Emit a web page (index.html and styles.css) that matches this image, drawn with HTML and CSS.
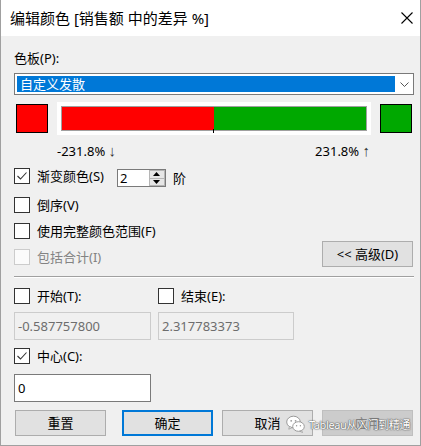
FILE: index.html
```html
<!DOCTYPE html>
<html lang="zh-CN">
<head>
<meta charset="utf-8">
<title>编辑颜色</title>
<link rel="stylesheet" href="styles.css">
</head>
<body>
<div class="window">
  <div class="titlebar">
    <span class="title">编辑颜色 [销售额 中的差异 %]</span>
    <svg class="close" width="12" height="12" viewBox="0 0 12 12"><path d="M0.5 0.5 L11.5 11.5 M11.5 0.5 L0.5 11.5" stroke="#000" stroke-width="1.1" fill="none"/></svg>
  </div>
  <div class="content">
    <div class="label">色板(P):</div>
    <div class="combo">
      <div class="combo-sel">自定义发散</div>
      <div class="combo-arrow"><svg width="9" height="5" viewBox="0 0 9 5"><path d="M0.5 0.5 L4.5 4.5 L8.5 0.5" stroke="#555" stroke-width="1" fill="none"/></svg></div>
    </div>
    <div class="color-row">
      <div class="swatch swatch-red"></div>
      <div class="ramp-frame">
        <div class="ramp">
          <div class="ramp-half ramp-red"></div>
          <div class="ramp-half ramp-green"></div>
          <span class="tick"></span>
        </div>
      </div>
      <div class="swatch swatch-green"></div>
    </div>
    <div class="range-labels"><span>-231.8% <span class="arrow">↓</span></span><span>231.8% <span class="arrow">↑</span></span></div>

    <div class="row row-step">
      <span class="cb checked"><svg viewBox="0 0 14 14" width="14" height="14"><polyline points="2.5,7 5.5,10 11.5,3.5" fill="none" stroke="#333" stroke-width="1.1"/></svg></span>
      <span class="cb-text">渐变颜色(S)</span>
      <div class="spin">
        <span class="spin-val">2</span>
        <div class="spin-btns">
          <div class="spin-btn"><svg width="7" height="4" viewBox="0 0 7 4"><path d="M0 4 L3.5 0 L7 4 Z" fill="#000"/></svg></div>
          <div class="spin-btn"><svg width="7" height="4" viewBox="0 0 7 4"><path d="M0 0 L3.5 4 L7 0 Z" fill="#000"/></svg></div>
        </div>
      </div>
      <span class="step-unit">阶</span>
    </div>
    <div class="row row-gap">
      <span class="cb"></span><span class="cb-text">倒序(V)</span>
    </div>
    <div class="row row-gap">
      <span class="cb"></span><span class="cb-text">使用完整颜色范围(F)</span>
    </div>
    <div class="row row-adv">
      <div class="adv-left"><span class="cb disabled"></span><span class="cb-text text-disabled">包括合计(I)</span></div>
      <button class="btn btn-adv">&lt;&lt; 高级(D)</button>
    </div>
    <div class="separator"></div>
    <div class="row row-range">
      <div class="range-col"><span class="cb"></span><span class="cb-text">开始(T):</span></div>
      <div class="range-col"><span class="cb"></span><span class="cb-text">结束(E):</span></div>
    </div>
    <div class="fields">
      <div class="field field-disabled field-start">-0.587757800</div>
      <div class="field field-disabled field-end">2.317783373</div>
    </div>
    <div class="row row-center">
      <span class="cb checked"><svg viewBox="0 0 14 14" width="14" height="14"><polyline points="2.5,7 5.5,10 11.5,3.5" fill="none" stroke="#333" stroke-width="1.1"/></svg></span>
      <span class="cb-text">中心(C):</span>
    </div>
    <div class="field field-center">0</div>
    <div class="buttons">
      <button class="btn btn-reset">重置</button>
      <button class="btn btn-default">确定</button>
      <button class="btn">取消</button>
      <button class="btn btn-disabled">应用</button>
    </div>
  </div>
  <div class="watermark">
    <svg class="wm-icon" width="19" height="18" viewBox="0 0 19 18">
      <ellipse cx="7.5" cy="7" rx="6.8" ry="5.8" fill="#fff" stroke="#9a9a9a" stroke-width="1"/>
      <path d="M3.5 11.5 L2.8 14.2 L6 12.6 Z" fill="#fff" stroke="#9a9a9a" stroke-width="0.8"/>
      <ellipse cx="12.5" cy="11.5" rx="5.8" ry="4.8" fill="#fff" stroke="#9a9a9a" stroke-width="1"/>
      <path d="M15.5 15.3 L16.5 17.5 L13.8 16.2 Z" fill="#fff" stroke="#9a9a9a" stroke-width="0.8"/>
      <circle cx="5.2" cy="5.8" r="0.9" fill="#9a9a9a"/>
      <circle cx="9.6" cy="5.8" r="0.9" fill="#9a9a9a"/>
      <circle cx="10.6" cy="10.8" r="0.7" fill="#9a9a9a"/>
      <circle cx="14.4" cy="10.8" r="0.7" fill="#9a9a9a"/>
    </svg>
    <span class="wm-text">Tableau从入门到精通</span>
  </div>
</div>
</body>
</html>
```

FILE: styles.css
```css
* { box-sizing: border-box; }
html, body { margin: 0; padding: 0; }
body {
  font-family: "Noto Sans", "Noto Sans CJK SC", sans-serif;
  font-size: 13px;
  color: #000;
  background: #f0f0f0;
}
.window {
  position: relative;
  width: 421px;
  height: 446px;
  border: 1px solid #a0a0a0;
  border-top: none;
  background: #f0f0f0;
  overflow: hidden;
}
.titlebar {
  height: 36px;
  background: #fff;
  display: flex;
  align-items: center;
  justify-content: space-between;
  padding: 0 7px 0 9px;
}
.title {
  font-size: 15px;
  line-height: 18px;
  font-family: "Noto Sans", "Noto Sans CJK SC", sans-serif;
}
.close { display: block; }
.content {
  padding: 14px 6px 0 13px;
  display: flex;
  flex-direction: column;
}
.label { height: 16px; line-height: 16px; }
.combo {
  margin-top: 7px;
  height: 22px;
  border: 1px solid #7a7a7a;
  background: #fff;
  display: flex;
  padding: 2px 0 2px 2px;
}
.combo-sel {
  flex: 1;
  background: #0078d7;
  color: #fff;
  line-height: 16px;
  padding-left: 3px;
}
.combo-arrow {
  width: 18px;
  display: flex;
  align-items: center;
  justify-content: center;
}
.combo-arrow svg { display: block; }
.color-row {
  margin-top: 7px;
  height: 33px;
  display: flex;
  align-items: center;
}
.swatch {
  width: 32px;
  height: 29px;
  border: 1px solid #000;
}
.swatch-red { background: #ff0000; margin-left: 2px; }
.swatch-green { background: #00a800; margin-left: 9px; }
.ramp-frame {
  margin-left: 9px;
  width: 314px;
  height: 33px;
  background: #fff;
  padding: 4px;
}
.ramp {
  position: relative;
  height: 25px;
  border: 1px solid #a0a0a0;
  display: flex;
}
.ramp-half { flex: 1; }
.ramp-red { background: #ff0000; }
.ramp-green { background: #00a800; }
.tick {
  position: absolute;
  left: 151px;
  bottom: -3px;
  width: 1px;
  height: 4px;
  background: #000;
}
.range-labels {
  margin-top: 8px;
  height: 16px;
  line-height: 16px;
  display: flex;
  justify-content: space-between;
  padding: 0 44px 0 43px;
}
.arrow {
  font-family: "Liberation Sans", "DejaVu Sans", sans-serif;
  font-size: 15px;
  line-height: 16px;
  color: #333;
}
.row {
  display: flex;
  align-items: flex-start;
}
.cb {
  flex: none;
  width: 16px;
  height: 16px;
  border: 1px solid #333;
  background: #fff;
  display: flex;
  align-items: center;
  justify-content: center;
}
.cb svg { display: block; }
.cb.disabled { border-color: #cccccc; background: #fbfbfb; }
.cb-text {
  margin-left: 7px;
  line-height: 16px;
  height: 16px;
  white-space: nowrap;
}
.text-disabled { color: #838383; }
.row-step { margin-top: 9px; }
.spin {
  margin-left: 13px;
  margin-top: 1px;
  width: 49px;
  height: 18px;
  border: 1px solid #7a7a7a;
  background: #fff;
  display: flex;
  justify-content: space-between;
}
.spin-val { line-height: 16px; padding-left: 2px; }
.spin-btns {
  width: 16px;
  display: flex;
  flex-direction: column;
}
.spin-btn {
  flex: 1;
  background: #e6e6e6;
  border: 1px solid #b5b5b5;
  display: flex;
  align-items: center;
  justify-content: center;
}
.spin-btn + .spin-btn { border-top: none; }
.spin-btn svg { display: block; }
.step-unit { margin-left: 7px; line-height: 18px; margin-top: 1px; }
.row-gap { margin-top: 10px; }
.row-adv {
  margin-top: 2px;
  justify-content: space-between;
}
.adv-left { display: flex; margin-top: 8px; }
.btn {
  font-family: inherit;
  font-size: 13px;
  color: #000;
  width: 91px;
  height: 26px;
  background: #e1e1e1;
  border: 1px solid #adadad;
  padding: 0;
  margin: 0;
  line-height: 22px;
}
.btn-adv { margin-right: 1px; }
.separator {
  margin-top: 9px;
  height: 2px;
  border-top: 1px solid #a0a0a0;
  border-bottom: 1px solid #fff;
}
.row-range { margin-top: 10px; }
.range-col { display: flex; width: 144px; }
.fields {
  margin-top: 8px;
  display: flex;
  gap: 7px;
}
.field {
  height: 28px;
  line-height: 26px;
  padding-left: 3px;
  border: 1px solid #7a7a7a;
  background: #fff;
}
.field-disabled {
  border-color: #cccccc;
  background: #f0f0f0;
  color: #6d6d6d;
}
.field-start { width: 137px; }
.field-end { width: 136px; }
.row-center { margin-top: 8px; }
.field-center { margin-top: 10px; width: 137px; }
.buttons {
  margin-top: 8px;
  display: flex;
  padding-left: 1px;
}
.buttons .btn + .btn { margin-left: 9px; }
.buttons .btn-reset + .btn { margin-left: 16px; }
.btn-default { border: 2px solid #0078d7; }
.btn-disabled {
  background: #cccccc;
  border-color: #bfbfbf;
  color: #838383;
}
.watermark {
  position: absolute;
  left: 285px;
  top: 415px;
  display: flex;
  align-items: center;
  gap: 4px;
}
.wm-icon { display: block; }
.wm-text {
  font-family: "Noto Sans", "Noto Sans CJK SC", sans-serif;
  font-size: 11px;
  letter-spacing: -0.4px;
  color: #fff;
  text-shadow: 0 0 1px #555, 0 0 1px #555, 0 0 2px #777;
}
```
